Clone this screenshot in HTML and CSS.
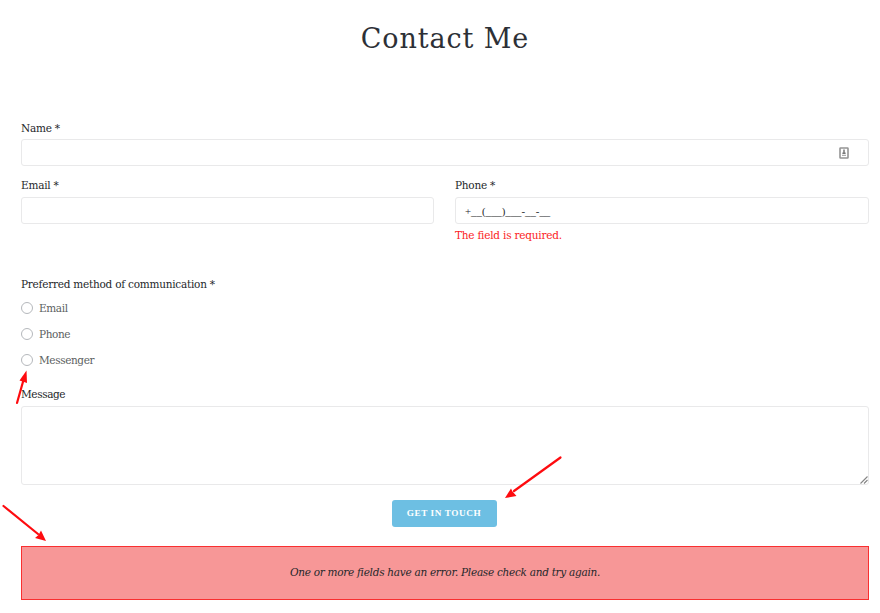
FILE: index.html
```html
<!DOCTYPE html>
<html lang="en">
<head>
    <meta charset="UTF-8">
    <meta name="viewport" content="width=device-width, initial-scale=1.0">
    <title>Contact Me</title>
    <link rel="stylesheet" href="styles.css">
</head>
<body>

    <div class="container">
        <h1>Contact Me</h1>
        <form id="contactForm" novalidate>
            <div class="form-group">
                <label for="name">Name *</label>
                <div class="input-wrap">
                    <input type="text" id="name" name="name">
                    <svg class="autofill" width="10" height="12" viewBox="0 0 10 12">
                        <rect x="1" y="1" width="8" height="10" rx="0.5" fill="#fff" stroke="#949494" stroke-width="1.6"/>
                        <path d="M5 2.6v3M3.4 6.2h3.2" stroke="#777" stroke-width="1.5"/>
                        <path d="M3 8.3h4" stroke="#999" stroke-width="1"/>
                    </svg>
                </div>
            </div>
            <div class="form-row">
                <div class="form-group">
                    <label for="email">Email *</label>
                    <input type="text" id="email" name="email">
                </div>
                <div class="form-group">
                    <label for="phone">Phone *</label>
                    <input type="text" id="phone" name="phone" value="+__(___)___-__-__">
                    <span class="field-error">The field is required.</span>
                </div>
            </div>
            <div class="methods">
                <div class="methods-title">Preferred method of communication *</div>
                <label class="option"><input type="radio" name="method"><span>Email</span></label>
                <label class="option"><input type="radio" name="method"><span>Phone</span></label>
                <label class="option"><input type="radio" name="method"><span>Messenger</span></label>
            </div>
            <div class="form-group">
                <label for="message" class="label-message">Message</label>
                <div class="input-wrap">
                    <textarea id="message" name="message"></textarea>
                    <svg class="grip" width="8" height="8" viewBox="0 0 8 8">
                        <path d="M0.5 7.5L7.5 0.5M4 7.5L7.5 4" stroke="#858585" stroke-width="1.1"/>
                    </svg>
                </div>
            </div>
            <button type="submit">Get in touch</button>
        </form>
        <div class="form-status">One or more fields have an error. Please check and try again.</div>
    </div>

    <!-- annotation arrows -->
    <svg class="arrows" width="880" height="613" viewBox="0 0 880 613">
        <g stroke="#fe0b0f" stroke-width="2.2" stroke-linecap="round">
            <path d="M17 403L23.5 380"/>
            <path d="M560.5 457.5L514 491"/>
            <path d="M3.5 506L38 534"/>
        </g>
        <g fill="#fe0b0f">
            <path d="M26.5 370.5L27 383L19.5 380.5Z"/>
            <path d="M505 498L511 488.5L512.5 491.5L516.5 496Z"/>
            <path d="M46 541L35 538L38.5 535L41 530.5Z"/>
        </g>
    </svg>

</body>
</html>
```
FILE: styles.css
```css
body {
    font-family: "DejaVu Serif", "Liberation Serif", serif;
    margin: 0;
    background-color: #fff;
    color: #25282b;
    overflow: hidden;
}
.container {
    width: 848px;
    margin-left: 21px;
    padding-top: 19px;
}
h1 {
    margin: 0 0 62px;
    height: 40px;
    line-height: 40px;
    font-size: 27px;
    font-weight: normal;
    letter-spacing: 0.9px;
    text-align: center;
    color: #2d3036;
}
form {
    display: flex;
    flex-direction: column;
}
.form-group {
    display: flex;
    flex-direction: column;
}
.form-group label,
.methods-title {
    height: 14px;
    line-height: 14px;
    margin-bottom: 4px;
    font-size: 10.5px;
    letter-spacing: -0.24px;
    align-self: flex-start;
    white-space: nowrap;
}
.input-wrap {
    position: relative;
    display: flex;
}
input[type="text"],
textarea {
    width: 100%;
    height: 27px;
    padding: 0 9px;
    border: 1px solid #e9e9ea;
    border-radius: 3px;
    box-sizing: border-box;
    background-color: #fff;
    color: #25282b;
    font-family: inherit;
    font-size: 10.5px;
    outline: none;
}
#phone {
    font-family: "Liberation Serif", serif;
    font-size: 10.8px;
}
.autofill {
    position: absolute;
    right: 20px;
    top: 8px;
}
.form-row {
    display: grid;
    grid-template-columns: 413px 414px;
    column-gap: 21px;
    margin-top: 12px;
    height: 99px;
}
.form-row label {
    margin-bottom: 5px;
}
.field-error {
    margin-top: 4px;
    height: 14px;
    line-height: 14px;
    font-size: 10.5px;
    letter-spacing: -0.22px;
    color: #fb1d1d;
}
.methods {
    display: flex;
    flex-direction: column;
    height: 110px;
}
.methods-title {
    margin-bottom: 4px;
}
.option {
    display: flex;
    align-items: center;
    gap: 6px;
    height: 26px;
    font-size: 10.5px;
    letter-spacing: -0.4px;
    color: #5c5f62;
}
.option input {
    appearance: none;
    width: 12px;
    height: 12px;
    margin: 0;
    border: 1px solid #b5b8bc;
    border-radius: 50%;
    background-color: #fff;
}
textarea {
    display: block;
    height: 79px;
    resize: none;
}
.grip {
    position: absolute;
    right: 1px;
    bottom: 1px;
}
.form-group .label-message {
    margin-bottom: 5px;
    letter-spacing: -0.4px;
}
button {
    align-self: center;
    width: 105px;
    height: 27px;
    margin: 15px 2px 0 0;
    padding: 0 0 1px;
    border: none;
    border-radius: 3px;
    background-color: #6dbfe3;
    color: #fff;
    font-family: "Liberation Serif", serif;
    font-size: 9.2px;
    font-weight: bold;
    letter-spacing: 0.6px;
    text-transform: uppercase;
    cursor: pointer;
}
.form-status {
    height: 52px;
    line-height: 51px;
    margin-top: 19px;
    border: 1px solid #f92f30;
    background-color: #f79797;
    font-size: 10.5px;
    letter-spacing: -0.28px;
    font-style: italic;
    text-align: center;
}
.arrows {
    position: absolute;
    left: 0;
    top: 0;
    fill: none;
    pointer-events: none;
}
```
